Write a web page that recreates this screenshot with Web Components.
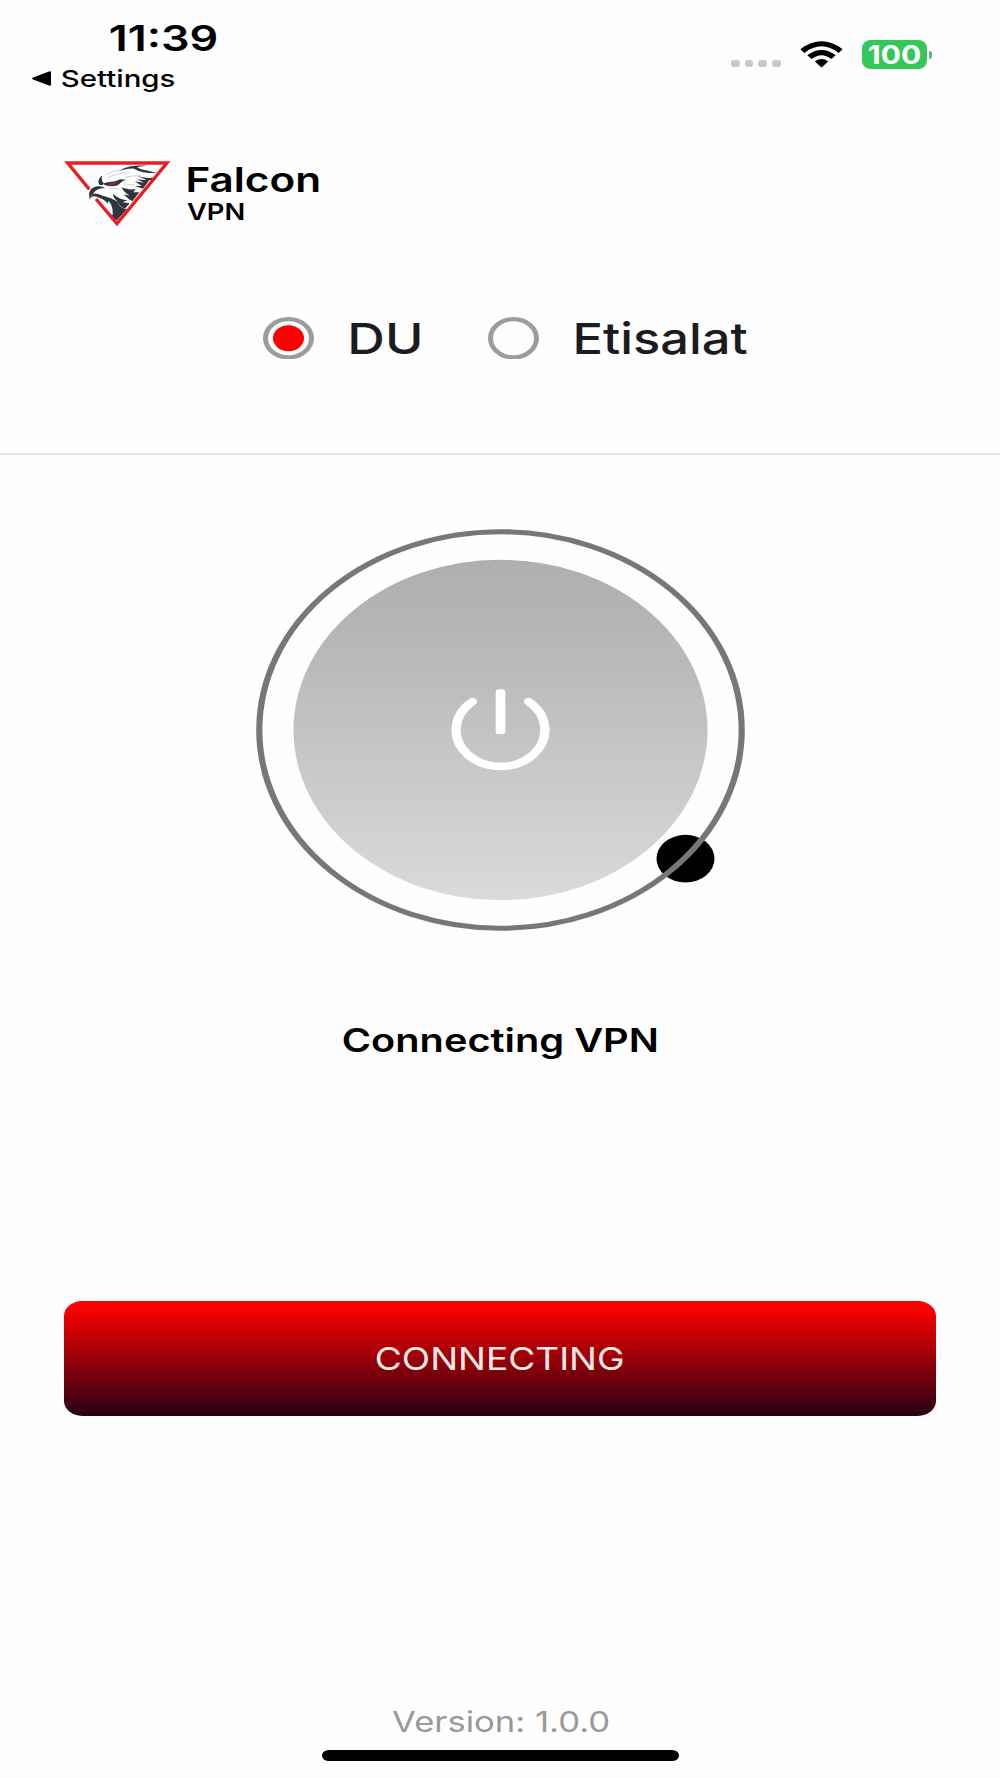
<!DOCTYPE html>
<html lang="en">
<head>
<meta charset="utf-8">
<title>Falcon VPN</title>
<style>
    body {
        margin: 0;
        background: #fefefe;
        color: #000;
        font-family: Inter, "Liberation Sans", sans-serif;
    }
</style>
</head>
<body>
<vpn-screen></vpn-screen>

<script>
// Text fitted to a given ink width, box height is the cap height
class WideText extends HTMLElement {
    constructor() {
        super();
        this.attachShadow({ mode: 'open' });
    }

    connectedCallback() {
        const size = Number(this.getAttribute('size'));
        const weight = this.getAttribute('weight') || '400';
        const width = Number(this.getAttribute('width'));
        const text = this.getAttribute('text');
        const family = 'Inter, "Liberation Sans", sans-serif';
        const cap = size * 0.727;

        const context = document.createElement('canvas').getContext('2d');
        context.font = `${weight} ${size}px ${family}`;
        const metrics = context.measureText(text);
        const left = -metrics.actualBoundingBoxLeft;
        const ink = metrics.actualBoundingBoxRight - left;

        this.shadowRoot.innerHTML = `
            <style>
                :host {
                    display: block;
                    flex: none;
                    width: ${width}px;
                    height: ${cap}px;
                }
                svg {
                    display: block;
                    overflow: visible;
                }
                text {
                    font: ${weight} ${size}px ${family};
                    fill: currentColor;
                }
            </style>
            <svg width="${width}" height="${cap}" viewBox="${left} 0 ${ink} ${cap}" preserveAspectRatio="none">
                <text x="0" y="${cap}">${text}</text>
            </svg>
        `;
    }
}

class StatusBar extends HTMLElement {
    constructor() {
        super();
        this.attachShadow({ mode: 'open' });
        this.shadowRoot.innerHTML = `
            <style>
                :host {
                    display: flex;
                    justify-content: space-between;
                    align-items: flex-start;
                    height: 161px;
                    box-sizing: border-box;
                    padding: 25px 68px 0 32px;
                }
                .time {
                    margin-left: 78px;
                }
                .back {
                    display: flex;
                    align-items: center;
                    gap: 11px;
                    margin-top: 19px;
                }
                .icons {
                    display: flex;
                    align-items: center;
                    margin-top: 15px;
                }
                .dots {
                    display: flex;
                    gap: 5px;
                    margin: 18px 19px 0 0;
                }
                .dots i {
                    width: 8.8px;
                    height: 7.5px;
                    border-radius: 3px;
                    background: #c9c9c9;
                }
                .battery {
                    display: flex;
                    align-items: center;
                    justify-content: center;
                    width: 65px;
                    height: 29px;
                    margin-left: 19px;
                    border-radius: 9px / 8px;
                    background: #34c759;
                    color: #fff;
                }
                .nub {
                    width: 3px;
                    height: 8px;
                    margin-left: 2px;
                    border-radius: 0 3px 3px 0;
                    background: #5fb87a;
                }
            </style>
            <div>
                <wide-text class="time" text="11:39" size="35.5" weight="600" width="106"></wide-text>
                <div class="back">
                    <svg width="19" height="15" viewBox="0 0 19 15"><path d="M1 6.5 17 .4Q19 0 19 1.5v12Q19 15 17 14.6L1 8.5Q-.7 7.5 1 6.5Z"/></svg>
                    <wide-text text="Settings" size="23" weight="500" width="113"></wide-text>
                </div>
            </div>
            <div class="icons">
                <div class="dots"><i></i><i></i><i></i><i></i></div>
                <svg width="43" height="27" viewBox="0 0 43 27">
                    <path d="M0.3 8.2Q21.5 -7.6 42.7 8.2L38.6 11.9Q21.5 -1.2 4.4 11.9Z"/>
                    <path d="M7.3 14.3Q21.5 3.6 35.7 14.3L31.4 18.1Q21.5 10.3 11.6 18.1Z"/>
                    <path d="M14.8 20.4Q21.5 15.6 28.2 20.4L21.5 26.6Z"/>
                </svg>
                <div class="battery"><wide-text text="100" size="25.5" weight="700" width="52"></wide-text></div>
                <div class="nub"></div>
            </div>
        `;
    }
}

class FalconLogo extends HTMLElement {
    constructor() {
        super();
        this.attachShadow({ mode: 'open' });
        this.shadowRoot.innerHTML = `
            <style>
                :host {
                    display: block;
                    width: 107px;
                    height: 66px;
                }
                svg {
                    display: block;
                }
            </style>
            <svg width="107" height="66" viewBox="27 33 321 198">
                <path d="M104 146C98 126 107 111 128 105L140 75Q190 48 244 46L312 64 303 84 200 204 165 202Q160 170 124 134 108 130 104 146Z" fill="#fff"/>
                <g fill="#30343f">
                    <path d="M105 149C98 129 105 113 126 109Q143 107 150 115C137 113 122 119 116 129 109 134 107 139 105 149Z"/>
                    <path d="M105 149 111 133C120 127 133 134 143 137 157 142 175 144 180 153 167 150 157 151 159 161 149 150 132 141 118 139Q109 138 105 149Z"/>
                    <path d="M158 151Q182 145 190 160C194 171 203 176 216 177L186 211C172 205 164 199 160 190L173 196C174 181 172 163 158 151Z"/>
                    <path d="M174 131C187 144 202 150 218 150L203 157 224 160 211 175C194 174 191 156 180 147Q174 141 174 131Z"/>
                    <path d="M200 112C216 119 230 119 242 117L235 127 253 127 232 154C221 148 213 141 207 133L224 137Q205 126 200 112Z"/>
                    <path d="M247 78C267 84 283 85 307 82L299 91 283 90 264 116 240 108 260 107 239 94 267 98 246 88 276 91Z"/>
                    <path d="M191 64C209 50 239 44 275 47L246 51C256 60 276 60 305 69 280 70 254 67 237 56 221 55 207 58 191 64Z"/>
                    <path d="M133 104C127 95 132 83 141 77 139 88 141 95 146 99L143 106Z"/>
                    <path d="M143 101C159 95 179 97 195 88L214 89C194 94 196 106 178 108 162 110 151 106 143 101Z"/>
                </g>
                <path d="M157 101Q172 99 188 95 180 105 165 105Z" fill="#a52a34"/>
                <g fill="none" stroke="#b7b9be" stroke-width="2">
                    <path d="M151 75Q175 61 203 60M158 82Q194 67 224 68M211 81Q231 77 256 77M209 101Q223 106 238 105M164 115Q181 113 192 118"/>
                </g>
                <path d="M123 147 186 221 336 39H38L103 118" fill="none" stroke="#ea1c24" stroke-width="10"/>
            </svg>
        `;
    }
}

class AppHeader extends HTMLElement {
    constructor() {
        super();
        this.attachShadow({ mode: 'open' });
        this.shadowRoot.innerHTML = `
            <style>
                :host {
                    display: flex;
                    gap: 16.5px;
                    height: 155.5px;
                    padding-left: 64px;
                }
                .name {
                    display: flex;
                    flex-direction: column;
                    gap: 12.5px;
                    padding-top: 6.2px;
                }
                .vpn {
                    margin-left: -1px;
                }
            </style>
            <falcon-logo></falcon-logo>
            <div class="name">
                <wide-text text="Falcon" size="33.8" weight="600" width="131"></wide-text>
                <wide-text class="vpn" text="VPN" size="22.4" weight="600" width="57"></wide-text>
            </div>
        `;
    }
}

class ProviderOption extends HTMLElement {
    constructor() {
        super();
        this.attachShadow({ mode: 'open' });
    }

    connectedCallback() {
        const checked = this.hasAttribute('checked');
        this.shadowRoot.innerHTML = `
            <style>
                :host {
                    display: flex;
                    align-items: center;
                    gap: 37px;
                    color: #1c1b1f;
                }
                svg {
                    display: block;
                }
                slot {
                    display: block;
                    padding-top: 2px;
                }
            </style>
            <svg width="51" height="42.5" viewBox="0 0 51 51" preserveAspectRatio="none">
                <circle cx="25.5" cy="25.5" r="23" fill="none" stroke="#9c9c9c" stroke-width="5"/>
                ${checked ? '<circle cx="25.5" cy="25.5" r="15.5" fill="#f00"/>' : ''}
            </svg>
            <slot></slot>
        `;
    }
}

class ConnectDial extends HTMLElement {
    constructor() {
        super();
        this.attachShadow({ mode: 'open' });
        this.shadowRoot.innerHTML = `
            <style>
                :host {
                    display: block;
                    width: 489px;
                    height: 402px;
                }
                svg {
                    display: block;
                }
            </style>
            <svg width="489" height="402" viewBox="0 0 489 489" preserveAspectRatio="none">
                <defs>
                    <linearGradient id="disc" x1="0" y1="0" x2="0" y2="1">
                        <stop offset="0" stop-color="#afafaf"/>
                        <stop offset=".2" stop-color="#b5b5b5"/>
                        <stop offset="1" stop-color="#dadada"/>
                    </linearGradient>
                </defs>
                <circle cx="244.5" cy="244.5" r="207" fill="url(#disc)"/>
                <circle cx="429.5" cy="401" r="29"/>
                <circle cx="244.5" cy="244.5" r="241.2" fill="none" stroke="#777" stroke-width="6.2"/>
                <g fill="none" stroke="#fff" stroke-width="9.2" stroke-linecap="round">
                    <path d="M216.5 210A44.4 44.4 0 1 0 272.5 210"/>
                </g>
                <rect x="239.7" y="195" width="9.6" height="54.5" rx="3.5" fill="#fff"/>
            </svg>
        `;
    }
}

class ConnectButton extends HTMLElement {
    constructor() {
        super();
        this.attachShadow({ mode: 'open' });
        this.shadowRoot.innerHTML = `
            <style>
                button {
                    display: flex;
                    align-items: center;
                    justify-content: center;
                    width: 872px;
                    height: 115px;
                    padding: 0 2px 0 0;
                    border: none;
                    border-radius: 18px / 15px;
                    background: linear-gradient(#ff0000 5%, #2b0014 98%);
                    color: #fdeae4;
                }
            </style>
            <button><slot></slot></button>
        `;
    }
}

class VpnScreen extends HTMLElement {
    constructor() {
        super();
        this.attachShadow({ mode: 'open' });
        this.shadowRoot.innerHTML = `
            <style>
                :host {
                    display: flex;
                    flex-direction: column;
                    align-items: center;
                    width: 1000px;
                    height: 1778px;
                    overflow: hidden;
                }
                status-bar, app-header {
                    align-self: stretch;
                }
                .providers {
                    display: flex;
                    gap: 67.5px;
                    align-self: stretch;
                    box-sizing: border-box;
                    height: 138.5px;
                    padding-left: 263px;
                    align-items: flex-start;
                    border-bottom: 2px solid #e3e3e3;
                }
                connect-dial {
                    margin: 74px 0 97px;
                }
                connect-button {
                    margin: 249px 0 295px;
                }
                .version {
                    color: #999;
                }
                .home {
                    width: 357px;
                    height: 11px;
                    margin-top: 19px;
                    border-radius: 7px / 5.5px;
                    background: #000;
                }
            </style>
            <status-bar></status-bar>
            <app-header></app-header>
            <div class="providers">
                <provider-option checked><wide-text text="DU" size="43" weight="500" width="69"></wide-text></provider-option>
                <provider-option><wide-text text="Etisalat" size="43" weight="500" width="171"></wide-text></provider-option>
            </div>
            <connect-dial></connect-dial>
            <wide-text text="Connecting VPN" size="32.5" weight="600" width="314"></wide-text>
            <connect-button><wide-text text="CONNECTING" size="31.5" width="247"></wide-text></connect-button>
            <wide-text class="version" text="Version: 1.0.0" size="28.5" width="217"></wide-text>
            <div class="home"></div>
        `;
    }
}

customElements.define('wide-text', WideText);
customElements.define('status-bar', StatusBar);
customElements.define('falcon-logo', FalconLogo);
customElements.define('app-header', AppHeader);
customElements.define('provider-option', ProviderOption);
customElements.define('connect-dial', ConnectDial);
customElements.define('connect-button', ConnectButton);
customElements.define('vpn-screen', VpnScreen);
</script>
</body>
</html>
